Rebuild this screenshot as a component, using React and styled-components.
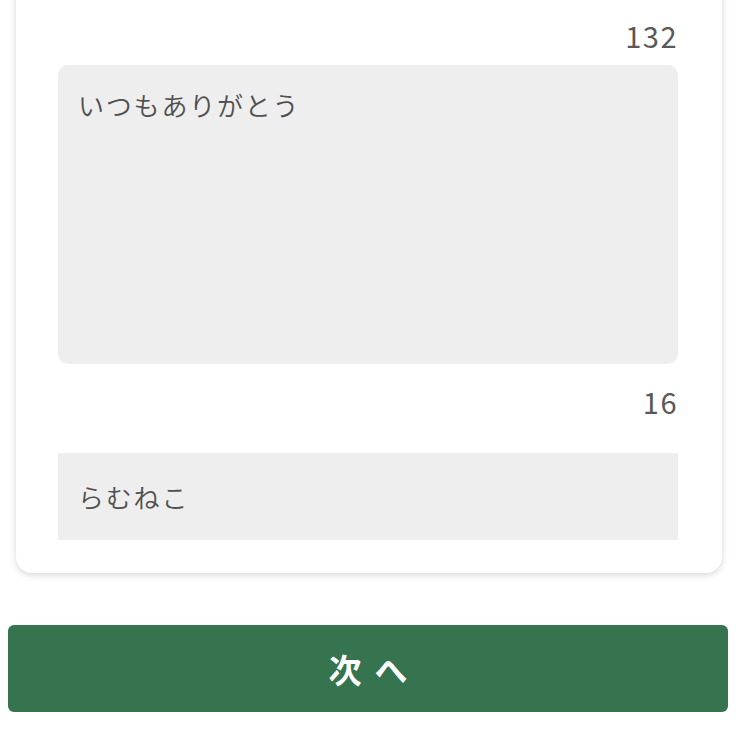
import React from 'react';
import styled, { createGlobalStyle } from 'styled-components';

const GlobalStyle = createGlobalStyle`
  html, body {
    margin: 0;
    padding: 0;
    background: #ffffff;
  }
  body {
    font-family: "Noto Sans CJK JP", "Noto Sans", sans-serif;
    overflow: hidden;
  }
`;

const App = () => {
  return (
    <>
      <GlobalStyle />
      <Page>
        <Card>
          <Counter>132</Counter>
          <Message defaultValue='いつもありがとう' readOnly />
          <Counter $gap>16</Counter>
          <NameInput type='text' defaultValue='らむねこ' readOnly />
        </Card>
        <NextButton type='button'>次へ</NextButton>
      </Page>
    </>
  );
};

export default App;

const Page = styled.div`
  display: flex;
  flex-direction: column;
  padding: 0 8px 20px;
`;

const Card = styled.div`
  display: flex;
  flex-direction: column;
  margin: -40px 6px 0 8px;
  padding: 55px 44px 33px 42px;
  background: #ffffff;
  border-radius: 16px;
  box-shadow: 0 2px 7px rgba(0, 0, 0, 0.16);
`;

const Counter = styled.div`
  height: 40px;
  line-height: 40px;
  margin: ${(p) => (p.$gap ? '17px 0 32px' : '0 0 10px')};
  text-align: right;
  font-size: 29px;
  font-weight: 400;
  letter-spacing: 1.5px;
  color: #595959;
`;

const Message = styled.textarea`
  display: block;
  box-sizing: border-box;
  width: 100%;
  height: 299px;
  margin: 0;
  padding: 19px 20px;
  border: none;
  outline: none;
  resize: none;
  border-radius: 10px;
  background: #eeeeee;
  font-family: inherit;
  font-size: 26px;
  font-weight: 350;
  line-height: 1.6;
  letter-spacing: 1.8px;
  color: #505050;
`;

const NameInput = styled.input`
  display: block;
  box-sizing: border-box;
  width: 100%;
  height: 87px;
  margin: 0;
  padding: 0 20px;
  border: none;
  outline: none;
  border-radius: 0;
  background: #eeeeee;
  font-family: inherit;
  font-size: 26px;
  font-weight: 350;
  letter-spacing: 1.8px;
  color: #505050;
`;

const NextButton = styled.button`
  display: flex;
  align-items: center;
  justify-content: center;
  height: 87px;
  margin-top: 52px;
  padding: 0 0 0 13px;
  border: none;
  border-radius: 6px;
  background: #36734f;
  font-family: inherit;
  font-size: 33px;
  font-weight: 700;
  letter-spacing: 13px;
  color: #ffffff;
`;
